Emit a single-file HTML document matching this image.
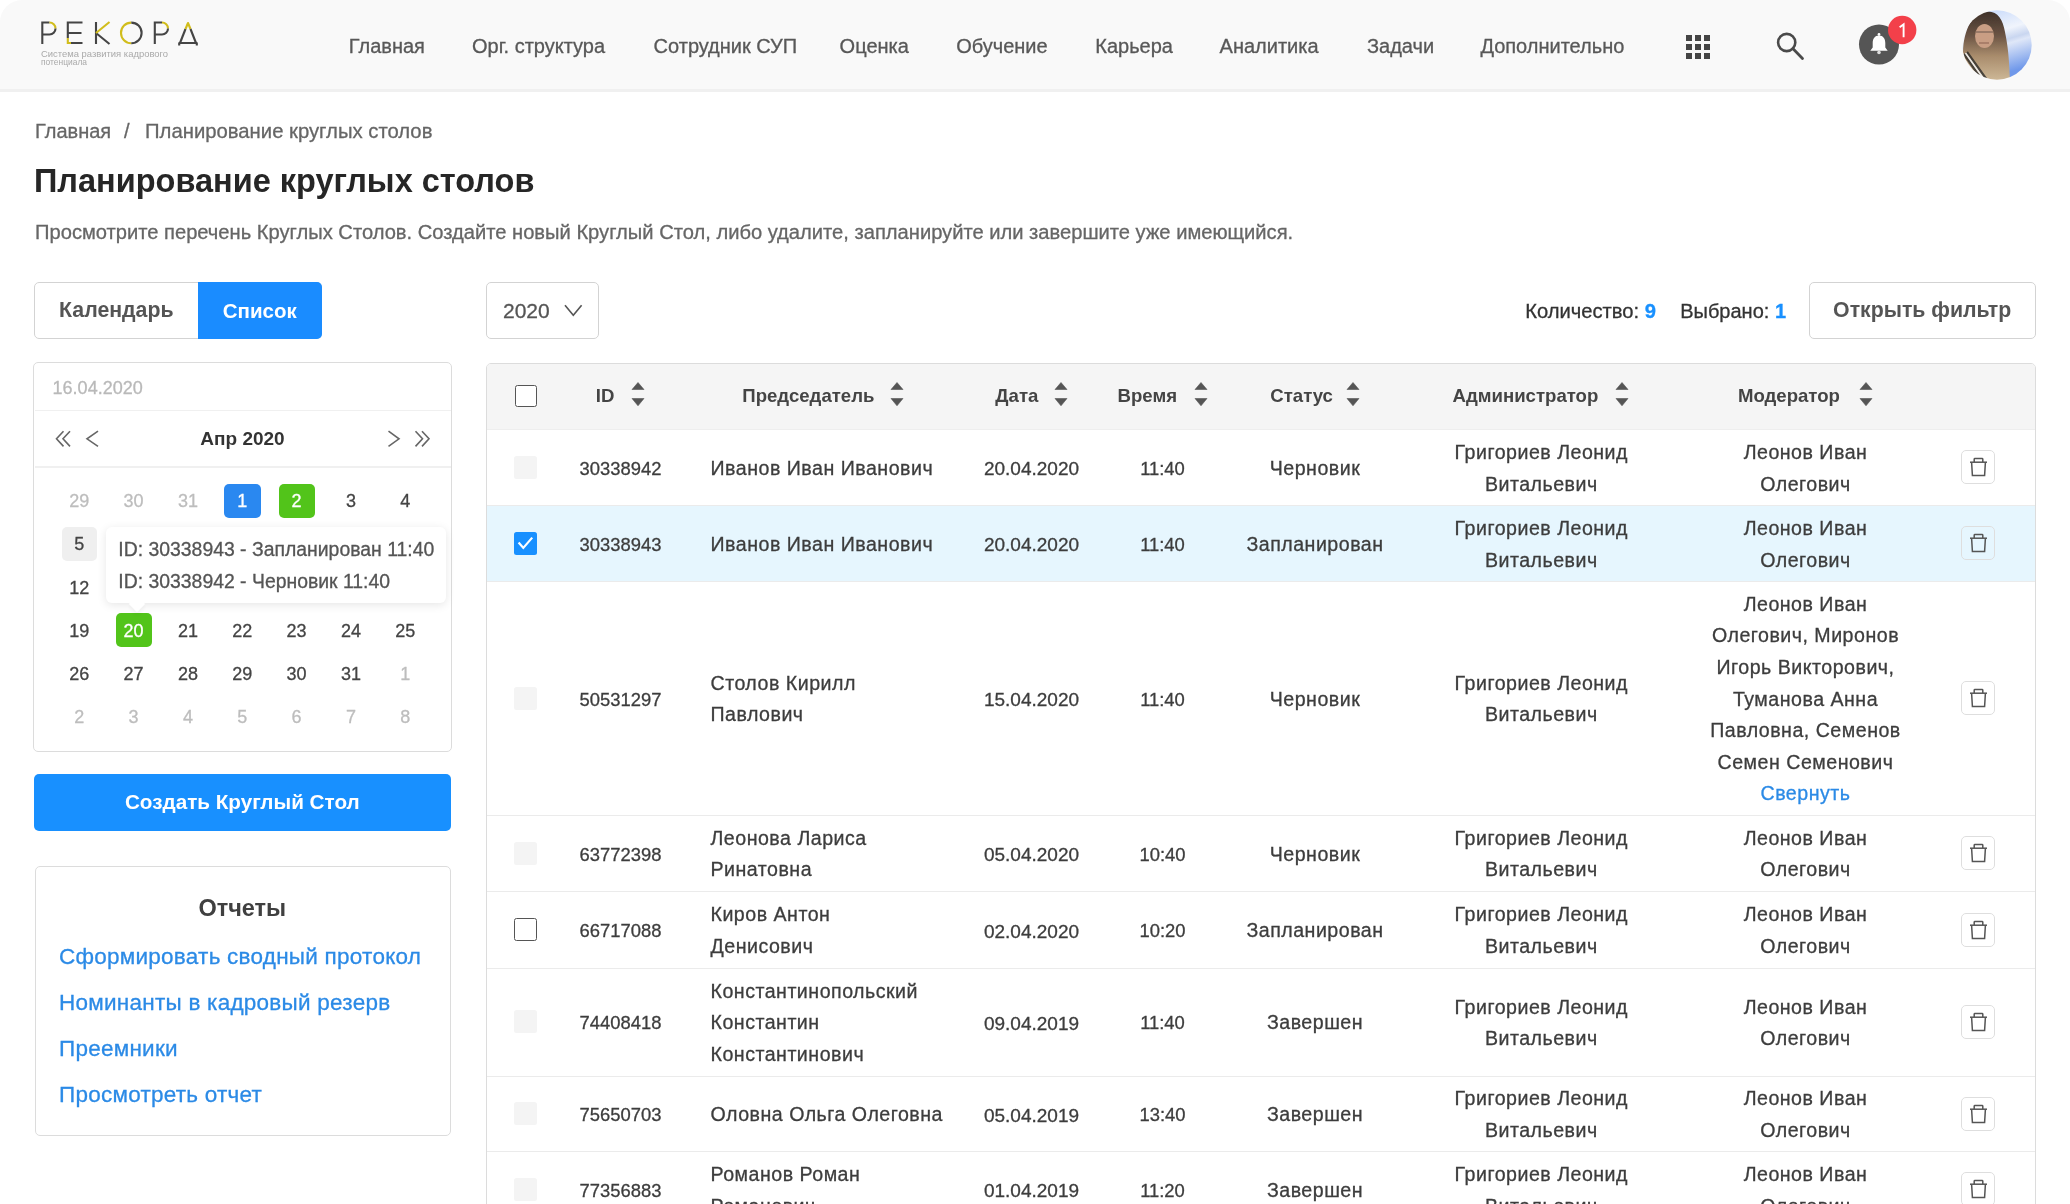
<!DOCTYPE html>
<html><head><meta charset="utf-8"><title>Планирование круглых столов</title>
<style>
html,body{margin:0;padding:0;background:#fff;}
body{width:2070px;height:1204px;position:relative;overflow:hidden;font-family:"Liberation Sans",sans-serif;}
.t{position:absolute;white-space:nowrap;line-height:1;-webkit-text-stroke:0.3px currentColor;}
b{font-weight:700;}
</style></head><body><div id="wrap" style="position:absolute;left:0;top:0;width:2070px;height:1204px;will-change:transform;">
<div style="position:absolute;left:0px;top:0px;width:2070px;height:89px;background:#f9f9f9;border-radius:22px 22px 0 0;"></div>
<div style="position:absolute;left:0px;top:89px;width:2070px;height:3px;background:#f0f0f0;"></div>
<svg style="position:absolute;left:36px;top:16px" width="170" height="54" viewBox="36 16 170 54">
<g fill="none" stroke-width="2.1" stroke-linecap="butt">
 <!-- P -->
 <path d="M42.3 44 V22.5 H49.5" stroke="#454545"/>
 <path d="M49.5 22.5 A6 6 0 0 1 55.5 28.5" stroke="#d1bd1c"/>
 <path d="M55.5 28.5 A6 6 0 0 1 49.5 34.5 H42.3" stroke="#454545"/>
 <!-- E -->
 <path d="M82.5 22.5 H67.8 V38" stroke="#454545"/>
 <path d="M67.8 38 V43 H71" stroke="#d1bd1c"/>
 <path d="M71 43 H82.5 M67.8 33 H81.5" stroke="#454545"/>
 <!-- K -->
 <path d="M96 22 V44 M96 33 L109.5 44" stroke="#454545"/>
 <path d="M96 33 L109.5 22" stroke="#d1bd1c"/>
 <!-- O -->
 <path d="M131.3 22.6 A10.3 10.3 0 0 0 131.3 43.2" stroke="#d1bd1c"/>
 <path d="M131.3 22.6 A10.3 10.3 0 0 1 131.3 43.2" stroke="#454545"/>
 <!-- P -->
 <path d="M154.8 44 V22.5 H162" stroke="#454545"/>
 <path d="M162 22.5 A6 6 0 0 1 168 28.5" stroke="#d1bd1c"/>
 <path d="M168 28.5 A6 6 0 0 1 162 34.5 H154.8" stroke="#454545"/>
 <!-- Д -->
 <path d="M180 43 L185.5 29" stroke="#454545"/>
 <path d="M185.5 29 L188 23 L190.5 29" stroke="#d1bd1c" stroke-linejoin="round"/>
 <path d="M190.5 29 L196 43 M178.5 43 H197.5 M179.2 43 V45.5 M196.8 43 V45.5" stroke="#454545"/>
</g>
<text x="41" y="56.5" font-family="Liberation Sans" font-size="9.2" fill="#a9a9a9" textLength="127" lengthAdjust="spacingAndGlyphs">Система развития кадрового</text>
<text x="41" y="64.5" font-family="Liberation Sans" font-size="9.2" fill="#a9a9a9" textLength="46" lengthAdjust="spacingAndGlyphs">потенциала</text>
</svg>
<div class="t" style="left:348.8px;top:36.4px;font-size:20px;color:#585858;font-weight:400;">Главная</div>
<div class="t" style="left:472.0px;top:36.4px;font-size:20px;color:#585858;font-weight:400;">Орг. структура</div>
<div class="t" style="left:653.6px;top:36.4px;font-size:20px;color:#585858;font-weight:400;">Сотрудник СУП</div>
<div class="t" style="left:839.6px;top:36.4px;font-size:20px;color:#585858;font-weight:400;">Оценка</div>
<div class="t" style="left:956.2px;top:36.4px;font-size:20px;color:#585858;font-weight:400;">Обучение</div>
<div class="t" style="left:1095.3px;top:36.4px;font-size:20px;color:#585858;font-weight:400;">Карьера</div>
<div class="t" style="left:1219.6px;top:36.4px;font-size:20px;color:#585858;font-weight:400;">Аналитика</div>
<div class="t" style="left:1367.0px;top:36.4px;font-size:20px;color:#585858;font-weight:400;">Задачи</div>
<div class="t" style="left:1480.4px;top:36.4px;font-size:20px;color:#585858;font-weight:400;">Дополнительно</div>
<div style="position:absolute;left:1686px;top:34.5px;width:6px;height:6px;background:#454545;"></div>
<div style="position:absolute;left:1695px;top:34.5px;width:6px;height:6px;background:#454545;"></div>
<div style="position:absolute;left:1704px;top:34.5px;width:6px;height:6px;background:#454545;"></div>
<div style="position:absolute;left:1686px;top:43.5px;width:6px;height:6px;background:#454545;"></div>
<div style="position:absolute;left:1695px;top:43.5px;width:6px;height:6px;background:#454545;"></div>
<div style="position:absolute;left:1704px;top:43.5px;width:6px;height:6px;background:#454545;"></div>
<div style="position:absolute;left:1686px;top:52.5px;width:6px;height:6px;background:#454545;"></div>
<div style="position:absolute;left:1695px;top:52.5px;width:6px;height:6px;background:#454545;"></div>
<div style="position:absolute;left:1704px;top:52.5px;width:6px;height:6px;background:#454545;"></div>
<svg style="position:absolute;left:1770px;top:28px" width="40" height="36" viewBox="1770 28 40 36">
<circle cx="1786.7" cy="42.5" r="8.6" fill="none" stroke="#4a4a4a" stroke-width="2.6"/>
<path d="M1792.8 48.6 L1802.5 58.4" stroke="#4a4a4a" stroke-width="2.8" stroke-linecap="round"/>
</svg>
<svg style="position:absolute;left:1855px;top:10px" width="70" height="60" viewBox="1855 10 70 60">
<circle cx="1879" cy="44.5" r="20" fill="#555"/>
<path d="M1879 35.5 c-4.2 0 -6.3 3.2 -6.3 7.5 v4.5 l-2.4 3.2 h17.4 l-2.4 -3.2 v-4.5 c0 -4.3 -2.1 -7.5 -6.3 -7.5z" fill="#fff"/>
<circle cx="1879" cy="34.5" r="1.4" fill="#fff"/>
<circle cx="1879" cy="52.5" r="1.8" fill="#ddd"/>
<circle cx="1902.2" cy="30" r="14.2" fill="#f3404a"/>
<path d="M1899.6 27.2 l4 -2.8 v12.9" stroke="#fff" stroke-width="1.9" fill="none"/>
</svg>
<svg style="position:absolute;left:1962px;top:9.5px" width="70" height="70" viewBox="0 0 70 70">
<defs>
 <clipPath id="av"><circle cx="35" cy="35" r="34.7"/></clipPath>
 <linearGradient id="sky" x1="0" y1="0" x2="0.3" y2="1">
  <stop offset="0" stop-color="#bcd2fa"/><stop offset="0.42" stop-color="#f0f4fc"/><stop offset="0.56" stop-color="#c9d6f0"/><stop offset="0.62" stop-color="#dfe7f8"/><stop offset="1" stop-color="#6f98ea"/>
 </linearGradient>
 <linearGradient id="hair" x1="0" y1="0" x2="0" y2="1">
  <stop offset="0" stop-color="#3f3129"/><stop offset="0.35" stop-color="#6b5444"/><stop offset="0.65" stop-color="#a98c6c"/><stop offset="1" stop-color="#cdb796"/>
 </linearGradient>
</defs>
<defs><filter id="avb"><feGaussianBlur stdDeviation="0.7"/></filter></defs><g clip-path="url(#av)"><g filter="url(#avb)">
 <rect width="70" height="70" fill="url(#sky)"/>
 <path d="M0 0 H24 C14 6 8 14 6 24 C3 30 0 34 0 40 Z" fill="#f4f6fa"/>
 <path d="M26 1.5 C36 1.5 41 10 43 22 C45 32 47 42 48 70 L6 70 C2 58 0 46 1.5 34 C3 24 6 14 12 8 C16 4 21 1.5 26 1.5z" fill="url(#hair)"/>
 <ellipse cx="22.5" cy="26" rx="9.5" ry="12" fill="#c99e84"/>
 <path d="M14 22 H31" stroke="#5a4a40" stroke-width="1.2" opacity="0.7"/>
 <path d="M17 33 H27" stroke="#9a6e5e" stroke-width="1.6" opacity="0.8"/>
 <g stroke="#222" stroke-width="2.2" opacity="0.75">
  <path d="M2 44 L20 70 M5 42 L25 70 M1 50 L14 70"/>
 </g>
 <g stroke="#f2f2f2" stroke-width="1.6" opacity="0.9">
  <path d="M3.5 43 L22.5 70 M0 46.5 L17 70"/>
 </g>
</g></g>
</svg>
<div class="t" style="left:35.0px;top:121.1px;font-size:20px;color:#666;font-weight:400;">Главная</div>
<div class="t" style="left:124.0px;top:121.1px;font-size:20px;color:#666;font-weight:400;">/</div>
<div class="t" style="left:145.0px;top:120.8px;font-size:20.3px;color:#666;font-weight:400;">Планирование круглых столов</div>
<div class="t" style="left:34.0px;top:165.1px;font-size:32.5px;color:#262626;font-weight:700;-webkit-text-stroke:0;">Планирование круглых столов</div>
<div class="t" style="left:35.0px;top:221.6px;font-size:20.15px;color:#666;font-weight:400;">Просмотрите перечень Круглых Столов. Создайте новый Круглый Стол, либо удалите, запланируйте или завершите уже имеющийся.</div>
<div style="position:absolute;left:34px;top:282px;width:288px;height:57px;box-sizing:border-box;border:1.3px solid #d3d3d3;border-radius:5px;background:#fff;"></div>
<div style="position:absolute;left:198px;top:282px;width:124px;height:57px;background:#1a8cff;border-radius:0 5px 5px 0;"></div>
<div class="t" style="left:-483.7px;width:1200px;text-align:center;top:300.0px;font-size:21.3px;color:#555;font-weight:700;-webkit-text-stroke:0;">Календарь</div>
<div class="t" style="left:-340.2px;width:1200px;text-align:center;top:300.6px;font-size:20.5px;color:#fff;font-weight:700;-webkit-text-stroke:0;">Список</div>
<div style="position:absolute;left:33.3px;top:362px;width:418.7px;height:390px;box-sizing:border-box;border:1.3px solid #dcdcdc;border-radius:5px;background:#fff;"></div>
<div style="position:absolute;left:35px;top:409.5px;width:416px;height:1.5px;background:#f0f0f0;"></div>
<div style="position:absolute;left:35px;top:466px;width:416px;height:1.5px;background:#f0f0f0;"></div>
<div class="t" style="left:52.6px;top:378.8px;font-size:18px;color:#b9b9b9;font-weight:400;">16.04.2020</div>
<svg style="position:absolute;left:50px;top:425px" width="390" height="28" viewBox="50 425 390 28">
<g fill="none" stroke="#666" stroke-width="1.6">
<path d="M63.5 431.2 L56.5 438.8 L63.5 446.4 M70 431.2 L63 438.8 L70 446.4"/>
<path d="M98 431.2 L87 438.8 L98 446.4"/>
<path d="M388.5 431.2 L399 438.8 L388.5 446.4"/>
<path d="M415.5 431.2 L422.5 438.8 L415.5 446.4 M422 431.2 L429 438.8 L422 446.4"/>
</g></svg>
<div class="t" style="left:-357.5px;width:1200px;text-align:center;top:429.4px;font-size:19px;color:#333;font-weight:700;-webkit-text-stroke:0;">Апр 2020</div>
<div style="position:absolute;left:224px;top:483.5px;width:36.5px;height:34.5px;background:#2a88f0;border-radius:5px;"></div>
<div style="position:absolute;left:278.5px;top:483.5px;width:36px;height:34.5px;background:#52c41a;border-radius:5px;"></div>
<div style="position:absolute;left:62px;top:527px;width:35px;height:34px;background:#efefef;border-radius:5px;"></div>
<div style="position:absolute;left:116.3px;top:613px;width:35.7px;height:34px;background:#52c41a;border-radius:5px;"></div>
<div class="t" style="left:-520.8px;width:1200px;text-align:center;top:492.1px;font-size:18px;color:#bdbdbd;font-weight:400;">29</div>
<div class="t" style="left:-466.4px;width:1200px;text-align:center;top:492.1px;font-size:18px;color:#bdbdbd;font-weight:400;">30</div>
<div class="t" style="left:-412.1px;width:1200px;text-align:center;top:492.1px;font-size:18px;color:#bdbdbd;font-weight:400;">31</div>
<div class="t" style="left:-357.8px;width:1200px;text-align:center;top:492.1px;font-size:18px;color:#fff;font-weight:400;">1</div>
<div class="t" style="left:-303.4px;width:1200px;text-align:center;top:492.1px;font-size:18px;color:#fff;font-weight:400;">2</div>
<div class="t" style="left:-249.1px;width:1200px;text-align:center;top:492.1px;font-size:18px;color:#444;font-weight:400;">3</div>
<div class="t" style="left:-194.7px;width:1200px;text-align:center;top:492.1px;font-size:18px;color:#444;font-weight:400;">4</div>
<div class="t" style="left:-520.8px;width:1200px;text-align:center;top:535.3px;font-size:18px;color:#444;font-weight:400;">5</div>
<div class="t" style="left:-520.8px;width:1200px;text-align:center;top:578.5px;font-size:18px;color:#444;font-weight:400;">12</div>
<div class="t" style="left:-520.8px;width:1200px;text-align:center;top:621.7px;font-size:18px;color:#444;font-weight:400;">19</div>
<div class="t" style="left:-466.4px;width:1200px;text-align:center;top:621.7px;font-size:18px;color:#fff;font-weight:400;">20</div>
<div class="t" style="left:-412.1px;width:1200px;text-align:center;top:621.7px;font-size:18px;color:#444;font-weight:400;">21</div>
<div class="t" style="left:-357.8px;width:1200px;text-align:center;top:621.7px;font-size:18px;color:#444;font-weight:400;">22</div>
<div class="t" style="left:-303.4px;width:1200px;text-align:center;top:621.7px;font-size:18px;color:#444;font-weight:400;">23</div>
<div class="t" style="left:-249.1px;width:1200px;text-align:center;top:621.7px;font-size:18px;color:#444;font-weight:400;">24</div>
<div class="t" style="left:-194.7px;width:1200px;text-align:center;top:621.7px;font-size:18px;color:#444;font-weight:400;">25</div>
<div class="t" style="left:-520.8px;width:1200px;text-align:center;top:664.9px;font-size:18px;color:#444;font-weight:400;">26</div>
<div class="t" style="left:-466.4px;width:1200px;text-align:center;top:664.9px;font-size:18px;color:#444;font-weight:400;">27</div>
<div class="t" style="left:-412.1px;width:1200px;text-align:center;top:664.9px;font-size:18px;color:#444;font-weight:400;">28</div>
<div class="t" style="left:-357.8px;width:1200px;text-align:center;top:664.9px;font-size:18px;color:#444;font-weight:400;">29</div>
<div class="t" style="left:-303.4px;width:1200px;text-align:center;top:664.9px;font-size:18px;color:#444;font-weight:400;">30</div>
<div class="t" style="left:-249.1px;width:1200px;text-align:center;top:664.9px;font-size:18px;color:#444;font-weight:400;">31</div>
<div class="t" style="left:-194.7px;width:1200px;text-align:center;top:664.9px;font-size:18px;color:#bdbdbd;font-weight:400;">1</div>
<div class="t" style="left:-520.8px;width:1200px;text-align:center;top:708.2px;font-size:18px;color:#bdbdbd;font-weight:400;">2</div>
<div class="t" style="left:-466.4px;width:1200px;text-align:center;top:708.2px;font-size:18px;color:#bdbdbd;font-weight:400;">3</div>
<div class="t" style="left:-412.1px;width:1200px;text-align:center;top:708.2px;font-size:18px;color:#bdbdbd;font-weight:400;">4</div>
<div class="t" style="left:-357.8px;width:1200px;text-align:center;top:708.2px;font-size:18px;color:#bdbdbd;font-weight:400;">5</div>
<div class="t" style="left:-303.4px;width:1200px;text-align:center;top:708.2px;font-size:18px;color:#bdbdbd;font-weight:400;">6</div>
<div class="t" style="left:-249.1px;width:1200px;text-align:center;top:708.2px;font-size:18px;color:#bdbdbd;font-weight:400;">7</div>
<div class="t" style="left:-194.7px;width:1200px;text-align:center;top:708.2px;font-size:18px;color:#bdbdbd;font-weight:400;">8</div>
<div style="position:absolute;left:106px;top:527px;width:340px;height:76px;background:#fff;border-radius:6px;box-shadow:0 2px 10px rgba(0,0,0,0.10);"></div>
<div style="position:absolute;left:129px;top:596px;width:16px;height:16px;background:#fff;transform:rotate(45deg) scale(0.72,0.72);box-shadow:3px 3px 6px rgba(0,0,0,0.06);"></div>
<div style="position:absolute;left:110px;top:590px;width:332px;height:12px;background:#fff;"></div>
<div class="t" style="left:118.3px;top:540.2px;font-size:19.4px;color:#555;font-weight:400;">ID: 30338943 - Запланирован 11:40</div>
<div class="t" style="left:118.3px;top:571.9px;font-size:19.4px;color:#555;font-weight:400;">ID: 30338942 - Черновик 11:40</div>
<div style="position:absolute;left:34px;top:774px;width:417px;height:57px;background:#1890ff;border-radius:5px;"></div>
<div class="t" style="left:-357.7px;width:1200px;text-align:center;top:792.0px;font-size:20.7px;color:#fff;font-weight:700;-webkit-text-stroke:0;">Создать Круглый Стол</div>
<div style="position:absolute;left:34.5px;top:866px;width:416px;height:269.5px;box-sizing:border-box;border:1.3px solid #dcdcdc;border-radius:5px;background:#fff;"></div>
<div class="t" style="left:-357.7px;width:1200px;text-align:center;top:897.3px;font-size:23.5px;color:#404040;font-weight:700;-webkit-text-stroke:0;">Отчеты</div>
<div class="t" style="left:59.0px;top:945.6px;font-size:22.5px;color:#2b8ae6;font-weight:400;letter-spacing:0.25px;">Сформировать сводный протокол</div>
<div class="t" style="left:59.0px;top:991.6px;font-size:22.5px;color:#2b8ae6;font-weight:400;letter-spacing:0.25px;">Номинанты в кадровый резерв</div>
<div class="t" style="left:59.0px;top:1037.6px;font-size:22.5px;color:#2b8ae6;font-weight:400;letter-spacing:0.25px;">Преемники</div>
<div class="t" style="left:59.0px;top:1083.6px;font-size:22.5px;color:#2b8ae6;font-weight:400;letter-spacing:0.25px;">Просмотреть отчет</div>
<div style="position:absolute;left:486px;top:282px;width:113px;height:57px;box-sizing:border-box;border:1.3px solid #d3d3d3;border-radius:5px;background:#fff;"></div>
<div class="t" style="left:503.0px;top:300.2px;font-size:21px;color:#555;font-weight:400;">2020</div>
<svg style="position:absolute;left:560px;top:300px" width="26" height="20" viewBox="560 300 26 20">
<path d="M565 305.2 L573.3 315.3 L581.6 305.2" fill="none" stroke="#555" stroke-width="1.6"/></svg>
<div class="t" style="right:414px;top:301.2px;font-size:20.2px;color:#333;">Количество: <b style="color:#1890ff">9</b></div>
<div class="t" style="right:284px;top:301.4px;font-size:20px;color:#333;">Выбрано: <b style="color:#1890ff">1</b></div>
<div style="position:absolute;left:1809px;top:282px;width:227px;height:57px;box-sizing:border-box;border:1.3px solid #d3d3d3;border-radius:5px;background:#fff;"></div>
<div class="t" style="left:1322.2px;width:1200px;text-align:center;top:300.3px;font-size:21.3px;color:#555;font-weight:700;-webkit-text-stroke:0;">Открыть фильтр</div>
<div style="position:absolute;left:486px;top:363px;width:1550px;height:1000px;box-sizing:border-box;border:1.3px solid #dcdcdc;border-radius:5px 5px 0 0;background:#fff;"></div>
<div style="position:absolute;left:487px;top:364px;width:1548px;height:66px;background:#f5f5f5;border-radius:4px 4px 0 0;"></div>
<div style="position:absolute;left:487px;top:429px;width:1548px;height:1.2px;background:#eeeeee;"></div>
<div style="position:absolute;left:514.5px;top:384.5px;width:22.5px;height:22.5px;box-sizing:border-box;border:1.6px solid #555;border-radius:2.5px;background:#fff;"></div>
<div class="t" style="left:595.8px;top:386.6px;font-size:18.6px;color:#444;font-weight:700;-webkit-text-stroke:0;">ID</div>
<svg style="position:absolute;left:631px;top:382.3px" width="14" height="26" viewBox="-1 -13 14 26">
<path d="M6 -12.5 L12 -5.5 L0 -5.5 Z M0 3.5 L12 3.5 L6 10.8 Z" fill="#555" stroke="#555" stroke-width="0.6" stroke-linejoin="round"/></svg>
<div class="t" style="left:742.3px;top:386.6px;font-size:18.6px;color:#444;font-weight:700;-webkit-text-stroke:0;">Председатель</div>
<svg style="position:absolute;left:889.8px;top:382.3px" width="14" height="26" viewBox="-1 -13 14 26">
<path d="M6 -12.5 L12 -5.5 L0 -5.5 Z M0 3.5 L12 3.5 L6 10.8 Z" fill="#555" stroke="#555" stroke-width="0.6" stroke-linejoin="round"/></svg>
<div class="t" style="left:995.3px;top:386.6px;font-size:18.6px;color:#444;font-weight:700;-webkit-text-stroke:0;">Дата</div>
<svg style="position:absolute;left:1054px;top:382.3px" width="14" height="26" viewBox="-1 -13 14 26">
<path d="M6 -12.5 L12 -5.5 L0 -5.5 Z M0 3.5 L12 3.5 L6 10.8 Z" fill="#555" stroke="#555" stroke-width="0.6" stroke-linejoin="round"/></svg>
<div class="t" style="left:1117.5px;top:386.6px;font-size:18.6px;color:#444;font-weight:700;-webkit-text-stroke:0;">Время</div>
<svg style="position:absolute;left:1193.7px;top:382.3px" width="14" height="26" viewBox="-1 -13 14 26">
<path d="M6 -12.5 L12 -5.5 L0 -5.5 Z M0 3.5 L12 3.5 L6 10.8 Z" fill="#555" stroke="#555" stroke-width="0.6" stroke-linejoin="round"/></svg>
<div class="t" style="left:1270.3px;top:386.6px;font-size:18.6px;color:#444;font-weight:700;-webkit-text-stroke:0;">Статус</div>
<svg style="position:absolute;left:1345.8px;top:382.3px" width="14" height="26" viewBox="-1 -13 14 26">
<path d="M6 -12.5 L12 -5.5 L0 -5.5 Z M0 3.5 L12 3.5 L6 10.8 Z" fill="#555" stroke="#555" stroke-width="0.6" stroke-linejoin="round"/></svg>
<div class="t" style="left:1452.5px;top:386.6px;font-size:18.6px;color:#444;font-weight:700;-webkit-text-stroke:0;">Администратор</div>
<svg style="position:absolute;left:1614.7px;top:382.3px" width="14" height="26" viewBox="-1 -13 14 26">
<path d="M6 -12.5 L12 -5.5 L0 -5.5 Z M0 3.5 L12 3.5 L6 10.8 Z" fill="#555" stroke="#555" stroke-width="0.6" stroke-linejoin="round"/></svg>
<div class="t" style="left:1737.9px;top:386.6px;font-size:18.6px;color:#444;font-weight:700;-webkit-text-stroke:0;">Модератор</div>
<svg style="position:absolute;left:1858.8px;top:382.3px" width="14" height="26" viewBox="-1 -13 14 26">
<path d="M6 -12.5 L12 -5.5 L0 -5.5 Z M0 3.5 L12 3.5 L6 10.8 Z" fill="#555" stroke="#555" stroke-width="0.6" stroke-linejoin="round"/></svg>
<div style="position:absolute;left:487px;top:505px;width:1548px;height:1.2px;background:#ebebeb;"></div>
<div style="position:absolute;left:514.3px;top:455.9px;width:23px;height:23px;background:#f4f4f4;border-radius:2.5px;"></div>
<div class="t" style="left:20.5px;width:1200px;text-align:center;top:459.8px;font-size:18.4px;color:#3d3d3d;font-weight:400;">30338942</div>
<div class="t" style="left:710.5px;top:458.8px;font-size:19.6px;color:#3d3d3d;font-weight:400;letter-spacing:0.5px;">Иванов Иван Иванович</div>
<div class="t" style="left:431.5px;width:1200px;text-align:center;top:459.3px;font-size:19px;color:#3d3d3d;font-weight:400;">20.04.2020</div>
<div class="t" style="left:562.5px;width:1200px;text-align:center;top:459.8px;font-size:18.4px;color:#3d3d3d;font-weight:400;">11:40</div>
<div class="t" style="left:715.0px;width:1200px;text-align:center;top:458.8px;font-size:19.6px;color:#3d3d3d;font-weight:400;letter-spacing:0.5px;">Черновик</div>
<div class="t" style="left:941.3px;width:1200px;text-align:center;top:443.0px;font-size:19.6px;color:#3d3d3d;font-weight:400;letter-spacing:0.5px;">Григориев Леонид</div>
<div class="t" style="left:941.3px;width:1200px;text-align:center;top:474.6px;font-size:19.6px;color:#3d3d3d;font-weight:400;letter-spacing:0.5px;">Витальевич</div>
<div class="t" style="left:1205.5px;width:1200px;text-align:center;top:443.0px;font-size:19.6px;color:#3d3d3d;font-weight:400;letter-spacing:0.5px;">Леонов Иван</div>
<div class="t" style="left:1205.5px;width:1200px;text-align:center;top:474.6px;font-size:19.6px;color:#3d3d3d;font-weight:400;letter-spacing:0.5px;">Олегович</div>
<div style="position:absolute;left:1961px;top:450.3px;width:34px;height:34px;box-sizing:border-box;border:1.3px solid #dedede;border-radius:5px;"></div>
<svg style="position:absolute;left:1961px;top:450.3px" width="34" height="34" viewBox="0 0 34 34">
<g fill="none" stroke="#555" stroke-width="1.5"><path d="M9 12.2 H26"/><path d="M13.2 12 V9.3 Q13.2 8.6 14 8.6 H21 Q21.8 8.6 21.8 9.3 V12"/><path d="M10.6 12.2 L11.4 25.5 H23.6 L24.4 12.2"/></g></svg>
<div style="position:absolute;left:487px;top:506px;width:1548px;height:76px;background:#e6f6fe;"></div>
<div style="position:absolute;left:487px;top:581px;width:1548px;height:1.2px;background:#ebebeb;"></div>
<div style="position:absolute;left:514.3px;top:531.9px;width:23px;height:23px;background:#1890ff;border-radius:2.5px;"></div>
<svg style="position:absolute;left:514.3px;top:531.9px" width="23" height="23" viewBox="0 0 23 23"><path d="M4.6 10.6 L9.3 15.9 L18.2 5.6" fill="none" stroke="#fff" stroke-width="2.2"/></svg>
<div class="t" style="left:20.5px;width:1200px;text-align:center;top:535.8px;font-size:18.4px;color:#3d3d3d;font-weight:400;">30338943</div>
<div class="t" style="left:710.5px;top:534.8px;font-size:19.6px;color:#3d3d3d;font-weight:400;letter-spacing:0.5px;">Иванов Иван Иванович</div>
<div class="t" style="left:431.5px;width:1200px;text-align:center;top:535.3px;font-size:19px;color:#3d3d3d;font-weight:400;">20.04.2020</div>
<div class="t" style="left:562.5px;width:1200px;text-align:center;top:535.8px;font-size:18.4px;color:#3d3d3d;font-weight:400;">11:40</div>
<div class="t" style="left:715.0px;width:1200px;text-align:center;top:534.8px;font-size:19.6px;color:#3d3d3d;font-weight:400;letter-spacing:0.5px;">Запланирован</div>
<div class="t" style="left:941.3px;width:1200px;text-align:center;top:519.0px;font-size:19.6px;color:#3d3d3d;font-weight:400;letter-spacing:0.5px;">Григориев Леонид</div>
<div class="t" style="left:941.3px;width:1200px;text-align:center;top:550.6px;font-size:19.6px;color:#3d3d3d;font-weight:400;letter-spacing:0.5px;">Витальевич</div>
<div class="t" style="left:1205.5px;width:1200px;text-align:center;top:519.0px;font-size:19.6px;color:#3d3d3d;font-weight:400;letter-spacing:0.5px;">Леонов Иван</div>
<div class="t" style="left:1205.5px;width:1200px;text-align:center;top:550.6px;font-size:19.6px;color:#3d3d3d;font-weight:400;letter-spacing:0.5px;">Олегович</div>
<div style="position:absolute;left:1961px;top:526.3px;width:34px;height:34px;box-sizing:border-box;border:1.3px solid #dedede;border-radius:5px;"></div>
<svg style="position:absolute;left:1961px;top:526.3px" width="34" height="34" viewBox="0 0 34 34">
<g fill="none" stroke="#555" stroke-width="1.5"><path d="M9 12.2 H26"/><path d="M13.2 12 V9.3 Q13.2 8.6 14 8.6 H21 Q21.8 8.6 21.8 9.3 V12"/><path d="M10.6 12.2 L11.4 25.5 H23.6 L24.4 12.2"/></g></svg>
<div style="position:absolute;left:487px;top:814.5px;width:1548px;height:1.2px;background:#ebebeb;"></div>
<div style="position:absolute;left:514.3px;top:686.65px;width:23px;height:23px;background:#f4f4f4;border-radius:2.5px;"></div>
<div class="t" style="left:20.5px;width:1200px;text-align:center;top:690.6px;font-size:18.4px;color:#3d3d3d;font-weight:400;">50531297</div>
<div class="t" style="left:710.5px;top:673.8px;font-size:19.6px;color:#3d3d3d;font-weight:400;letter-spacing:0.5px;">Столов Кирилл</div>
<div class="t" style="left:710.5px;top:705.4px;font-size:19.6px;color:#3d3d3d;font-weight:400;letter-spacing:0.5px;">Павлович</div>
<div class="t" style="left:431.5px;width:1200px;text-align:center;top:690.1px;font-size:19px;color:#3d3d3d;font-weight:400;">15.04.2020</div>
<div class="t" style="left:562.5px;width:1200px;text-align:center;top:690.6px;font-size:18.4px;color:#3d3d3d;font-weight:400;">11:40</div>
<div class="t" style="left:715.0px;width:1200px;text-align:center;top:689.6px;font-size:19.6px;color:#3d3d3d;font-weight:400;letter-spacing:0.5px;">Черновик</div>
<div class="t" style="left:941.3px;width:1200px;text-align:center;top:673.8px;font-size:19.6px;color:#3d3d3d;font-weight:400;letter-spacing:0.5px;">Григориев Леонид</div>
<div class="t" style="left:941.3px;width:1200px;text-align:center;top:705.4px;font-size:19.6px;color:#3d3d3d;font-weight:400;letter-spacing:0.5px;">Витальевич</div>
<div class="t" style="left:1205.5px;width:1200px;text-align:center;top:594.8px;font-size:19.6px;color:#3d3d3d;font-weight:400;letter-spacing:0.5px;">Леонов Иван</div>
<div class="t" style="left:1205.5px;width:1200px;text-align:center;top:626.4px;font-size:19.6px;color:#3d3d3d;font-weight:400;letter-spacing:0.5px;">Олегович, Миронов</div>
<div class="t" style="left:1205.5px;width:1200px;text-align:center;top:658.0px;font-size:19.6px;color:#3d3d3d;font-weight:400;letter-spacing:0.5px;">Игорь Викторович,</div>
<div class="t" style="left:1205.5px;width:1200px;text-align:center;top:689.6px;font-size:19.6px;color:#3d3d3d;font-weight:400;letter-spacing:0.5px;">Туманова Анна</div>
<div class="t" style="left:1205.5px;width:1200px;text-align:center;top:721.2px;font-size:19.6px;color:#3d3d3d;font-weight:400;letter-spacing:0.5px;">Павловна, Семенов</div>
<div class="t" style="left:1205.5px;width:1200px;text-align:center;top:752.8px;font-size:19.6px;color:#3d3d3d;font-weight:400;letter-spacing:0.5px;">Семен Семенович</div>
<div class="t" style="left:1205.5px;width:1200px;text-align:center;top:784.4px;font-size:19.6px;color:#3d3d3d;font-weight:400;letter-spacing:0.5px;"><span style='color:#2b8ae6'>Свернуть</span></div>
<div style="position:absolute;left:1961px;top:681.05px;width:34px;height:34px;box-sizing:border-box;border:1.3px solid #dedede;border-radius:5px;"></div>
<svg style="position:absolute;left:1961px;top:681.05px" width="34" height="34" viewBox="0 0 34 34">
<g fill="none" stroke="#555" stroke-width="1.5"><path d="M9 12.2 H26"/><path d="M13.2 12 V9.3 Q13.2 8.6 14 8.6 H21 Q21.8 8.6 21.8 9.3 V12"/><path d="M10.6 12.2 L11.4 25.5 H23.6 L24.4 12.2"/></g></svg>
<div style="position:absolute;left:487px;top:891px;width:1548px;height:1.2px;background:#ebebeb;"></div>
<div style="position:absolute;left:514.3px;top:841.65px;width:23px;height:23px;background:#f4f4f4;border-radius:2.5px;"></div>
<div class="t" style="left:20.5px;width:1200px;text-align:center;top:845.6px;font-size:18.4px;color:#3d3d3d;font-weight:400;">63772398</div>
<div class="t" style="left:710.5px;top:828.8px;font-size:19.6px;color:#3d3d3d;font-weight:400;letter-spacing:0.5px;">Леонова Лариса</div>
<div class="t" style="left:710.5px;top:860.4px;font-size:19.6px;color:#3d3d3d;font-weight:400;letter-spacing:0.5px;">Ринатовна</div>
<div class="t" style="left:431.5px;width:1200px;text-align:center;top:845.1px;font-size:19px;color:#3d3d3d;font-weight:400;">05.04.2020</div>
<div class="t" style="left:562.5px;width:1200px;text-align:center;top:845.6px;font-size:18.4px;color:#3d3d3d;font-weight:400;">10:40</div>
<div class="t" style="left:715.0px;width:1200px;text-align:center;top:844.6px;font-size:19.6px;color:#3d3d3d;font-weight:400;letter-spacing:0.5px;">Черновик</div>
<div class="t" style="left:941.3px;width:1200px;text-align:center;top:828.8px;font-size:19.6px;color:#3d3d3d;font-weight:400;letter-spacing:0.5px;">Григориев Леонид</div>
<div class="t" style="left:941.3px;width:1200px;text-align:center;top:860.4px;font-size:19.6px;color:#3d3d3d;font-weight:400;letter-spacing:0.5px;">Витальевич</div>
<div class="t" style="left:1205.5px;width:1200px;text-align:center;top:828.8px;font-size:19.6px;color:#3d3d3d;font-weight:400;letter-spacing:0.5px;">Леонов Иван</div>
<div class="t" style="left:1205.5px;width:1200px;text-align:center;top:860.4px;font-size:19.6px;color:#3d3d3d;font-weight:400;letter-spacing:0.5px;">Олегович</div>
<div style="position:absolute;left:1961px;top:836.05px;width:34px;height:34px;box-sizing:border-box;border:1.3px solid #dedede;border-radius:5px;"></div>
<svg style="position:absolute;left:1961px;top:836.05px" width="34" height="34" viewBox="0 0 34 34">
<g fill="none" stroke="#555" stroke-width="1.5"><path d="M9 12.2 H26"/><path d="M13.2 12 V9.3 Q13.2 8.6 14 8.6 H21 Q21.8 8.6 21.8 9.3 V12"/><path d="M10.6 12.2 L11.4 25.5 H23.6 L24.4 12.2"/></g></svg>
<div style="position:absolute;left:487px;top:967.5px;width:1548px;height:1.2px;background:#ebebeb;"></div>
<div style="position:absolute;left:514.3px;top:918.15px;width:23px;height:23px;box-sizing:border-box;border:1.6px solid #555;border-radius:2.5px;background:#fff;"></div>
<div class="t" style="left:20.5px;width:1200px;text-align:center;top:922.1px;font-size:18.4px;color:#3d3d3d;font-weight:400;">66717088</div>
<div class="t" style="left:710.5px;top:905.3px;font-size:19.6px;color:#3d3d3d;font-weight:400;letter-spacing:0.5px;">Киров Антон</div>
<div class="t" style="left:710.5px;top:936.9px;font-size:19.6px;color:#3d3d3d;font-weight:400;letter-spacing:0.5px;">Денисович</div>
<div class="t" style="left:431.5px;width:1200px;text-align:center;top:921.6px;font-size:19px;color:#3d3d3d;font-weight:400;">02.04.2020</div>
<div class="t" style="left:562.5px;width:1200px;text-align:center;top:922.1px;font-size:18.4px;color:#3d3d3d;font-weight:400;">10:20</div>
<div class="t" style="left:715.0px;width:1200px;text-align:center;top:921.1px;font-size:19.6px;color:#3d3d3d;font-weight:400;letter-spacing:0.5px;">Запланирован</div>
<div class="t" style="left:941.3px;width:1200px;text-align:center;top:905.3px;font-size:19.6px;color:#3d3d3d;font-weight:400;letter-spacing:0.5px;">Григориев Леонид</div>
<div class="t" style="left:941.3px;width:1200px;text-align:center;top:936.9px;font-size:19.6px;color:#3d3d3d;font-weight:400;letter-spacing:0.5px;">Витальевич</div>
<div class="t" style="left:1205.5px;width:1200px;text-align:center;top:905.3px;font-size:19.6px;color:#3d3d3d;font-weight:400;letter-spacing:0.5px;">Леонов Иван</div>
<div class="t" style="left:1205.5px;width:1200px;text-align:center;top:936.9px;font-size:19.6px;color:#3d3d3d;font-weight:400;letter-spacing:0.5px;">Олегович</div>
<div style="position:absolute;left:1961px;top:912.55px;width:34px;height:34px;box-sizing:border-box;border:1.3px solid #dedede;border-radius:5px;"></div>
<svg style="position:absolute;left:1961px;top:912.55px" width="34" height="34" viewBox="0 0 34 34">
<g fill="none" stroke="#555" stroke-width="1.5"><path d="M9 12.2 H26"/><path d="M13.2 12 V9.3 Q13.2 8.6 14 8.6 H21 Q21.8 8.6 21.8 9.3 V12"/><path d="M10.6 12.2 L11.4 25.5 H23.6 L24.4 12.2"/></g></svg>
<div style="position:absolute;left:487px;top:1075.5px;width:1548px;height:1.2px;background:#ebebeb;"></div>
<div style="position:absolute;left:514.3px;top:1010.4px;width:23px;height:23px;background:#f4f4f4;border-radius:2.5px;"></div>
<div class="t" style="left:20.5px;width:1200px;text-align:center;top:1014.3px;font-size:18.4px;color:#3d3d3d;font-weight:400;">74408418</div>
<div class="t" style="left:710.5px;top:981.7px;font-size:19.6px;color:#3d3d3d;font-weight:400;letter-spacing:0.5px;">Константинопольский</div>
<div class="t" style="left:710.5px;top:1013.3px;font-size:19.6px;color:#3d3d3d;font-weight:400;letter-spacing:0.5px;">Константин</div>
<div class="t" style="left:710.5px;top:1044.9px;font-size:19.6px;color:#3d3d3d;font-weight:400;letter-spacing:0.5px;">Константинович</div>
<div class="t" style="left:431.5px;width:1200px;text-align:center;top:1013.8px;font-size:19px;color:#3d3d3d;font-weight:400;">09.04.2019</div>
<div class="t" style="left:562.5px;width:1200px;text-align:center;top:1014.3px;font-size:18.4px;color:#3d3d3d;font-weight:400;">11:40</div>
<div class="t" style="left:715.0px;width:1200px;text-align:center;top:1013.3px;font-size:19.6px;color:#3d3d3d;font-weight:400;letter-spacing:0.5px;">Завершен</div>
<div class="t" style="left:941.3px;width:1200px;text-align:center;top:997.5px;font-size:19.6px;color:#3d3d3d;font-weight:400;letter-spacing:0.5px;">Григориев Леонид</div>
<div class="t" style="left:941.3px;width:1200px;text-align:center;top:1029.1px;font-size:19.6px;color:#3d3d3d;font-weight:400;letter-spacing:0.5px;">Витальевич</div>
<div class="t" style="left:1205.5px;width:1200px;text-align:center;top:997.5px;font-size:19.6px;color:#3d3d3d;font-weight:400;letter-spacing:0.5px;">Леонов Иван</div>
<div class="t" style="left:1205.5px;width:1200px;text-align:center;top:1029.1px;font-size:19.6px;color:#3d3d3d;font-weight:400;letter-spacing:0.5px;">Олегович</div>
<div style="position:absolute;left:1961px;top:1004.8px;width:34px;height:34px;box-sizing:border-box;border:1.3px solid #dedede;border-radius:5px;"></div>
<svg style="position:absolute;left:1961px;top:1004.8px" width="34" height="34" viewBox="0 0 34 34">
<g fill="none" stroke="#555" stroke-width="1.5"><path d="M9 12.2 H26"/><path d="M13.2 12 V9.3 Q13.2 8.6 14 8.6 H21 Q21.8 8.6 21.8 9.3 V12"/><path d="M10.6 12.2 L11.4 25.5 H23.6 L24.4 12.2"/></g></svg>
<div style="position:absolute;left:487px;top:1151px;width:1548px;height:1.2px;background:#ebebeb;"></div>
<div style="position:absolute;left:514.3px;top:1102.15px;width:23px;height:23px;background:#f4f4f4;border-radius:2.5px;"></div>
<div class="t" style="left:20.5px;width:1200px;text-align:center;top:1106.1px;font-size:18.4px;color:#3d3d3d;font-weight:400;">75650703</div>
<div class="t" style="left:710.5px;top:1105.1px;font-size:19.6px;color:#3d3d3d;font-weight:400;letter-spacing:0.5px;">Оловна Ольга Олеговна</div>
<div class="t" style="left:431.5px;width:1200px;text-align:center;top:1105.6px;font-size:19px;color:#3d3d3d;font-weight:400;">05.04.2019</div>
<div class="t" style="left:562.5px;width:1200px;text-align:center;top:1106.1px;font-size:18.4px;color:#3d3d3d;font-weight:400;">13:40</div>
<div class="t" style="left:715.0px;width:1200px;text-align:center;top:1105.1px;font-size:19.6px;color:#3d3d3d;font-weight:400;letter-spacing:0.5px;">Завершен</div>
<div class="t" style="left:941.3px;width:1200px;text-align:center;top:1089.3px;font-size:19.6px;color:#3d3d3d;font-weight:400;letter-spacing:0.5px;">Григориев Леонид</div>
<div class="t" style="left:941.3px;width:1200px;text-align:center;top:1120.9px;font-size:19.6px;color:#3d3d3d;font-weight:400;letter-spacing:0.5px;">Витальевич</div>
<div class="t" style="left:1205.5px;width:1200px;text-align:center;top:1089.3px;font-size:19.6px;color:#3d3d3d;font-weight:400;letter-spacing:0.5px;">Леонов Иван</div>
<div class="t" style="left:1205.5px;width:1200px;text-align:center;top:1120.9px;font-size:19.6px;color:#3d3d3d;font-weight:400;letter-spacing:0.5px;">Олегович</div>
<div style="position:absolute;left:1961px;top:1096.55px;width:34px;height:34px;box-sizing:border-box;border:1.3px solid #dedede;border-radius:5px;"></div>
<svg style="position:absolute;left:1961px;top:1096.55px" width="34" height="34" viewBox="0 0 34 34">
<g fill="none" stroke="#555" stroke-width="1.5"><path d="M9 12.2 H26"/><path d="M13.2 12 V9.3 Q13.2 8.6 14 8.6 H21 Q21.8 8.6 21.8 9.3 V12"/><path d="M10.6 12.2 L11.4 25.5 H23.6 L24.4 12.2"/></g></svg>
<div style="position:absolute;left:487px;top:1227px;width:1548px;height:1.2px;background:#ebebeb;"></div>
<div style="position:absolute;left:514.3px;top:1177.9px;width:23px;height:23px;background:#f4f4f4;border-radius:2.5px;"></div>
<div class="t" style="left:20.5px;width:1200px;text-align:center;top:1181.8px;font-size:18.4px;color:#3d3d3d;font-weight:400;">77356883</div>
<div class="t" style="left:710.5px;top:1165.0px;font-size:19.6px;color:#3d3d3d;font-weight:400;letter-spacing:0.5px;">Романов Роман</div>
<div class="t" style="left:710.5px;top:1196.6px;font-size:19.6px;color:#3d3d3d;font-weight:400;letter-spacing:0.5px;">Романович</div>
<div class="t" style="left:431.5px;width:1200px;text-align:center;top:1181.3px;font-size:19px;color:#3d3d3d;font-weight:400;">01.04.2019</div>
<div class="t" style="left:562.5px;width:1200px;text-align:center;top:1181.8px;font-size:18.4px;color:#3d3d3d;font-weight:400;">11:20</div>
<div class="t" style="left:715.0px;width:1200px;text-align:center;top:1180.8px;font-size:19.6px;color:#3d3d3d;font-weight:400;letter-spacing:0.5px;">Завершен</div>
<div class="t" style="left:941.3px;width:1200px;text-align:center;top:1165.0px;font-size:19.6px;color:#3d3d3d;font-weight:400;letter-spacing:0.5px;">Григориев Леонид</div>
<div class="t" style="left:941.3px;width:1200px;text-align:center;top:1196.6px;font-size:19.6px;color:#3d3d3d;font-weight:400;letter-spacing:0.5px;">Витальевич</div>
<div class="t" style="left:1205.5px;width:1200px;text-align:center;top:1165.0px;font-size:19.6px;color:#3d3d3d;font-weight:400;letter-spacing:0.5px;">Леонов Иван</div>
<div class="t" style="left:1205.5px;width:1200px;text-align:center;top:1196.6px;font-size:19.6px;color:#3d3d3d;font-weight:400;letter-spacing:0.5px;">Олегович</div>
<div style="position:absolute;left:1961px;top:1172.3px;width:34px;height:34px;box-sizing:border-box;border:1.3px solid #dedede;border-radius:5px;"></div>
<svg style="position:absolute;left:1961px;top:1172.3px" width="34" height="34" viewBox="0 0 34 34">
<g fill="none" stroke="#555" stroke-width="1.5"><path d="M9 12.2 H26"/><path d="M13.2 12 V9.3 Q13.2 8.6 14 8.6 H21 Q21.8 8.6 21.8 9.3 V12"/><path d="M10.6 12.2 L11.4 25.5 H23.6 L24.4 12.2"/></g></svg>
</div></body></html>
